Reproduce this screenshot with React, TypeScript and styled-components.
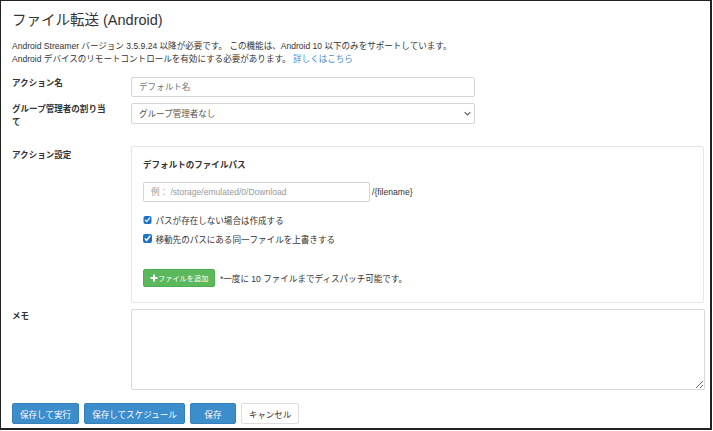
import React from 'react';
import styled, { createGlobalStyle } from 'styled-components';

const GlobalStyle = createGlobalStyle`
  html, body {
    margin: 0;
    padding: 0;
    background: #fff;
  }
  body {
    font-family: "Liberation Sans", "Noto Sans CJK JP", sans-serif;
    font-size: 8.55px;
    color: #333;
  }
  * {
    box-sizing: border-box;
  }
`;

const Frame = styled.div`
  width: 712px;
  height: 430px;
  padding: 9px 6px 0 11px;
  border: 1px solid #222;
  border-width: 1px 2px 2px 1px;
  overflow: hidden;
`;

const Title = styled.h1`
  margin: 0 0 10px;
  font-size: 14.5px;
  line-height: 20px;
  font-weight: 400;
  color: #333;
`;

const Description = styled.p`
  margin: 0 0 11px;
  font-size: 8.55px;
  line-height: 13px;
`;

const MoreLink = styled.a`
  color: #3c8dcb;
  text-decoration: none;
`;

const Row = styled.div<{ $gap?: number }>`
  display: grid;
  grid-template-columns: 119px 1fr;
  margin-bottom: ${(p) => p.$gap ?? 6}px;
`;

const Label = styled.label<{ $top?: number }>`
  padding: ${(p) => p.$top ?? 0}px 17px 0 0;
  font-size: 8.55px;
  line-height: 12.5px;
  font-weight: 700;
  color: #333;
`;

const NameInput = styled.input`
  display: block;
  width: 344px;
  height: 20px;
  padding: 0 7px;
  font: inherit;
  font-size: 8.55px;
  color: #555;
  background: #fff;
  border: 1px solid #d5d5d5;
  border-radius: 2px;
  &::placeholder {
    color: #777;
    opacity: 1;
  }
`;

const SelectWrap = styled.div`
  position: relative;
  width: 344px;
  height: 21px;
`;

const Select = styled.select`
  display: block;
  width: 100%;
  height: 100%;
  padding: 0 7px;
  font: inherit;
  font-size: 8.55px;
  color: #555;
  background: #fff;
  border: 1px solid #d5d5d5;
  border-radius: 2px;
  appearance: none;
`;

const Chevron = styled.svg`
  position: absolute;
  right: 4px;
  top: 8px;
  width: 7px;
  height: 5px;
`;

const Panel = styled.div`
  height: 157px;
  padding: 12px 11px 0;
  background: #fff;
  border: 1px solid #e6e6e6;
  border-radius: 2px;
`;

const PanelHeading = styled.div`
  margin-bottom: 10px;
  font-size: 8.55px;
  line-height: 13px;
  font-weight: 700;
`;

const PathRow = styled.div`
  display: flex;
  align-items: center;
  gap: 2px;
  margin-bottom: 11px;
`;

const PathInput = styled(NameInput)`
  width: 227px;
  &::placeholder {
    color: #999;
  }
`;

const PathSuffix = styled.span`
  font-size: 8.6px;
`;

const CheckRow = styled.label`
  display: flex;
  align-items: center;
  gap: 4px;
  height: 14px;
  margin-bottom: 4.5px;
`;

const CheckBox = styled.input`
  width: 8.5px;
  height: 8.5px;
  margin: 0;
  accent-color: #1a73c9;
`;

const AddRow = styled.div`
  display: flex;
  align-items: center;
  gap: 5px;
  margin-top: 23px;
`;

const AddButton = styled.button`
  display: flex;
  align-items: center;
  gap: 0;
  width: 72px;
  height: 18px;
  padding: 0 0 0 6px;
  font: inherit;
  font-size: 7.2px;
  white-space: nowrap;
  color: #fff;
  background: #5cb85c;
  border: 1px solid #4cae4c;
  border-radius: 2px;
`;

const Memo = styled.textarea`
  display: block;
  width: 574px;
  height: 81px;
  background: #fff;
  border: 1px solid #d9d9d9;
  border-radius: 2px;
`;

const Actions = styled.div`
  display: flex;
  gap: 5px;
  margin-top: 13px;
`;

const ActionButton = styled.button<{ $width: number; $plain?: boolean }>`
  width: ${(p) => p.$width}px;
  height: 21px;
  padding: 0;
  font: inherit;
  font-size: 8.55px;
  color: ${(p) => (p.$plain ? '#333' : '#fff')};
  background: ${(p) => (p.$plain ? '#fff' : '#3c8dcb')};
  border: 1px solid ${(p) => (p.$plain ? '#ddd' : '#367fb8')};
  border-radius: 2px;
`;

const App: React.FC = () => {
  return (
    <Frame>
      <GlobalStyle />
      <Title>ファイル転送 (Android)</Title>
      <Description>
        Android Streamer バージョン 3.5.9.24 以降が必要です。 この機能は、Android 10 以下のみをサポートしています。
        <br />
        Android デバイスのリモートコントロールを有効にする必要があります。 <MoreLink href="#">詳しくはこちら</MoreLink>
      </Description>
      <Row>
        <Label>アクション名</Label>
        <NameInput placeholder="デフォルト名" />
      </Row>
      <Row $gap={18}>
        <Label>グループ管理者の割り当て</Label>
        <SelectWrap>
          <Select defaultValue="none">
            <option value="none">グループ管理者なし</option>
          </Select>
          <Chevron viewBox="0 0 10 6">
            <path d="M1 1l4 4 4-4" fill="none" stroke="#555" strokeWidth="1.5" />
          </Chevron>
        </SelectWrap>
      </Row>
      <Row>
        <Label $top={3}>アクション設定</Label>
        <Panel>
          <PanelHeading>デフォルトのファイルパス</PanelHeading>
          <PathRow>
            <PathInput placeholder="例： /storage/emulated/0/Download" />
            <PathSuffix>/{'{filename}'}</PathSuffix>
          </PathRow>
          <CheckRow>
            <CheckBox type="checkbox" defaultChecked />
            パスが存在しない場合は作成する
          </CheckRow>
          <CheckRow>
            <CheckBox type="checkbox" defaultChecked />
            移動先のパスにある同一ファイルを上書きする
          </CheckRow>
          <AddRow>
            <AddButton>
              <svg width="8" height="8" viewBox="0 0 8 8">
                <path d="M4 .5v7M.5 4h7" stroke="#fff" strokeWidth="2" />
              </svg>
              ファイルを追加
            </AddButton>
            <span>*一度に 10 ファイルまでディスパッチ可能です。</span>
          </AddRow>
        </Panel>
      </Row>
      <Row $gap={0}>
        <Label $top={1}>メモ</Label>
        <Memo />
      </Row>
      <Actions>
        <ActionButton $width={67}>保存して実行</ActionButton>
        <ActionButton $width={101}>保存してスケジュール</ActionButton>
        <ActionButton $width={46}>保存</ActionButton>
        <ActionButton $width={58} $plain>キャンセル</ActionButton>
      </Actions>
    </Frame>
  );
};

export default App;
